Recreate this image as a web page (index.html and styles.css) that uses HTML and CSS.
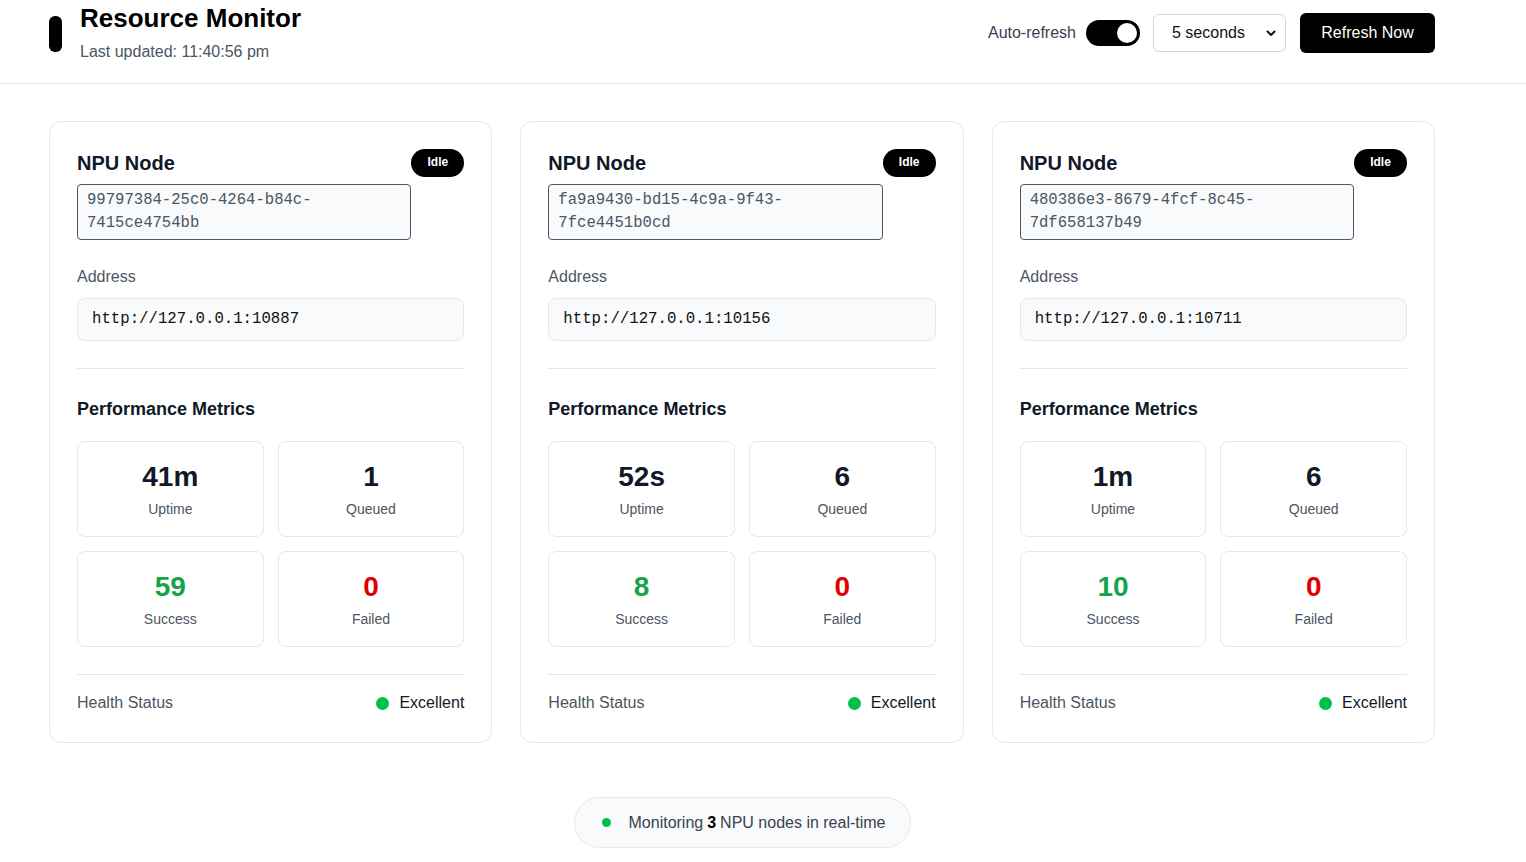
FILE: index.html
```html
<!DOCTYPE html>
<html lang="en">
<head>
<meta charset="utf-8">
<title>Resource Monitor</title>
<link rel="stylesheet" href="styles.css">
</head>
<body>
<header class="topbar">
  <div class="container topbar-inner">
    <div class="brand">
      <span class="brand-bar"></span>
      <div class="brand-text">
        <h1 class="title">Resource Monitor</h1>
        <div class="updated">Last updated: 11:40:56 pm</div>
      </div>
    </div>
    <div class="controls">
      <span class="auto-label">Auto-refresh</span>
      <span class="toggle"><span class="knob"></span></span>
      <div class="select">
        <span>5 seconds</span>
        <svg class="chev" width="10" height="7" viewBox="0 0 10 7"><path d="M1.5 1.5 L5 5 L8.5 1.5" fill="none" stroke="#111" stroke-width="2" stroke-linecap="round" stroke-linejoin="round"/></svg>
      </div>
      <button class="btn">Refresh Now</button>
    </div>
  </div>
</header>

<main class="container main">
  <div class="grid">
    <section class="card">
      <div class="card-head">
        <div class="head-left">
          <h2 class="node-title">NPU Node</h2>
          <div class="uuid">99797384-25c0-4264-b84c-7415ce4754bb</div>
        </div>
        <span class="badge">Idle</span>
      </div>
      <div class="label">Address</div>
      <div class="addr">http://127.0.0.1:10887</div>
      <div class="divider"></div>
      <h3 class="metrics-title">Performance Metrics</h3>
      <div class="metrics">
        <div class="metric"><div class="val">41m</div><div class="mlabel">Uptime</div></div>
        <div class="metric"><div class="val">1</div><div class="mlabel">Queued</div></div>
        <div class="metric"><div class="val green">59</div><div class="mlabel">Success</div></div>
        <div class="metric"><div class="val red">0</div><div class="mlabel">Failed</div></div>
      </div>
      <div class="divider2"></div>
      <div class="health">
        <span class="hlabel">Health Status</span>
        <span class="hval"><span class="dot"></span>Excellent</span>
      </div>
    </section>

    <section class="card">
      <div class="card-head">
        <div class="head-left">
          <h2 class="node-title">NPU Node</h2>
          <div class="uuid">fa9a9430-bd15-4c9a-9f43-7fce4451b0cd</div>
        </div>
        <span class="badge">Idle</span>
      </div>
      <div class="label">Address</div>
      <div class="addr">http://127.0.0.1:10156</div>
      <div class="divider"></div>
      <h3 class="metrics-title">Performance Metrics</h3>
      <div class="metrics">
        <div class="metric"><div class="val">52s</div><div class="mlabel">Uptime</div></div>
        <div class="metric"><div class="val">6</div><div class="mlabel">Queued</div></div>
        <div class="metric"><div class="val green">8</div><div class="mlabel">Success</div></div>
        <div class="metric"><div class="val red">0</div><div class="mlabel">Failed</div></div>
      </div>
      <div class="divider2"></div>
      <div class="health">
        <span class="hlabel">Health Status</span>
        <span class="hval"><span class="dot"></span>Excellent</span>
      </div>
    </section>

    <section class="card">
      <div class="card-head">
        <div class="head-left">
          <h2 class="node-title">NPU Node</h2>
          <div class="uuid">480386e3-8679-4fcf-8c45-7df658137b49</div>
        </div>
        <span class="badge">Idle</span>
      </div>
      <div class="label">Address</div>
      <div class="addr">http://127.0.0.1:10711</div>
      <div class="divider"></div>
      <h3 class="metrics-title">Performance Metrics</h3>
      <div class="metrics">
        <div class="metric"><div class="val">1m</div><div class="mlabel">Uptime</div></div>
        <div class="metric"><div class="val">6</div><div class="mlabel">Queued</div></div>
        <div class="metric"><div class="val green">10</div><div class="mlabel">Success</div></div>
        <div class="metric"><div class="val red">0</div><div class="mlabel">Failed</div></div>
      </div>
      <div class="divider2"></div>
      <div class="health">
        <span class="hlabel">Health Status</span>
        <span class="hval"><span class="dot"></span>Excellent</span>
      </div>
    </section>
  </div>

  <div class="footer">
    <div class="pill"><span class="pdot"></span>Monitoring <b>3</b> NPU nodes in real-time</div>
  </div>
</main>
</body>
</html>
```

FILE: styles.css
```css
* { box-sizing: border-box; }
html, body { margin: 0; padding: 0; background: #fff; }
body {
  font-family: "Liberation Sans", Arial, sans-serif;
  color: #111827;
  font-size: 16px;
}
.container {
  width: 1386px;
  margin-left: 49px;
}
.topbar {
  border-bottom: 1px solid #e5e7eb;
  padding: 2px 0 19px;
}
.topbar-inner {
  display: flex;
  align-items: center;
  justify-content: space-between;
}
.brand { display: flex; align-items: center; gap: 18px; }
.brand-bar {
  width: 13px;
  height: 36px;
  background: #000;
  border-radius: 6px;
  margin-top: 1px;
}
.title {
  margin: 0;
  font-size: 26px;
  line-height: 32px;
  font-weight: 700;
  color: #000;
}
.updated {
  margin-top: 6px;
  font-size: 16px;
  line-height: 24px;
  color: #4b5563;
}
.controls {
  display: flex;
  align-items: center;
}
.auto-label {
  font-size: 16px;
  color: #374151;
  margin-right: 10px;
}
.toggle {
  width: 54px;
  height: 26px;
  background: #000;
  border-radius: 13px;
  display: flex;
  align-items: center;
  justify-content: flex-end;
  padding-right: 3px;
  margin-right: 13px;
}
.knob {
  width: 20px;
  height: 20px;
  background: #fff;
  border-radius: 50%;
}
.select {
  width: 133px;
  height: 38px;
  border: 1px solid #d1d5db;
  border-radius: 6px;
  display: flex;
  align-items: center;
  justify-content: space-between;
  padding: 0 9px 0 18px;
  font-size: 16px;
  color: #111;
  margin-right: 14px;
}
.btn {
  width: 135px;
  height: 40px;
  background: #000;
  color: #fff;
  border: 0;
  border-radius: 6px;
  font-family: "Liberation Sans", Arial, sans-serif;
  font-size: 16px;
  padding: 0;
}
.main { padding-top: 37px; }
.grid {
  display: grid;
  grid-template-columns: repeat(3, 1fr);
  gap: 28px;
}
.card {
  border: 1px solid #e5e7eb;
  border-radius: 12px;
  padding: 27px 27px 27px;
}
.card-head {
  display: flex;
  align-items: flex-start;
}
.head-left { flex: 1; min-width: 0; }
.node-title {
  margin: 0;
  font-size: 20px;
  line-height: 28px;
  font-weight: 700;
  color: #111827;
}
.uuid {
  margin-top: 7px;
  border: 1px solid #4b5563;
  background: #f9fafb;
  border-radius: 4px;
  padding: 4px 9px 4px;
  font-family: "Liberation Mono", monospace;
  font-size: 15.6px;
  line-height: 23px;
  color: #4b5563;
}
.badge {
  width: 53px;
  height: 28px;
  border-radius: 14px;
  background: #000;
  color: #fff;
  font-size: 12px;
  font-weight: 700;
  display: flex;
  align-items: center;
  justify-content: center;
  padding-bottom: 2px;
}
.label {
  margin-top: 25px;
  font-size: 16px;
  line-height: 24px;
  color: #4b5563;
}
.addr {
  margin-top: 9px;
  background: #f9fafb;
  border: 1px solid #e5e7eb;
  border-radius: 8px;
  padding: 11px 14px 12px;
  font-family: "Liberation Mono", monospace;
  font-size: 15.7px;
  line-height: 18px;
  color: #111;
}
.divider {
  height: 1px;
  background: #e5e7eb;
  margin-top: 27px;
}
.metrics-title {
  margin: 26px 0 0;
  font-size: 18px;
  line-height: 28px;
  font-weight: 700;
  color: #111827;
}
.metrics {
  margin-top: 18px;
  display: grid;
  grid-template-columns: 1fr 1fr;
  gap: 14px;
}
.metric {
  border: 1px solid #e5e7eb;
  border-radius: 8px;
  padding: 17px 8px 17px;
  text-align: center;
}
.val {
  font-size: 28px;
  line-height: 36px;
  font-weight: 700;
  color: #111827;
}
.val.green { color: #16a34a; }
.val.red { color: #e00000; }
.mlabel {
  margin-top: 4px;
  font-size: 14px;
  line-height: 20px;
  color: #4b5563;
}
.divider2 {
  height: 1px;
  background: #e5e7eb;
  margin-top: 27px;
}
.health {
  display: flex;
  justify-content: space-between;
  align-items: center;
  padding-top: 16px;
  font-size: 16px;
  line-height: 24px;
}
.hlabel { color: #4b5563; }
.hval { display: flex; align-items: center; color: #111827; }
.dot {
  width: 13px;
  height: 13px;
  border-radius: 50%;
  background: #00c04b;
  margin-right: 10px;
}
.footer {
  display: flex;
  justify-content: center;
  margin-top: 54px;
}
.pill {
  width: 337px;
  height: 51px;
  background: #f9fafb;
  border: 1px solid #e5e7eb;
  border-radius: 26px;
  display: flex;
  align-items: center;
  padding-left: 27px;
  font-size: 16px;
  color: #374151;
}
.pill b { color: #000; margin: 0 4px; }
.pdot {
  width: 9px;
  height: 9px;
  border-radius: 50%;
  background: #00c04b;
  margin-right: 18px;
}
```
